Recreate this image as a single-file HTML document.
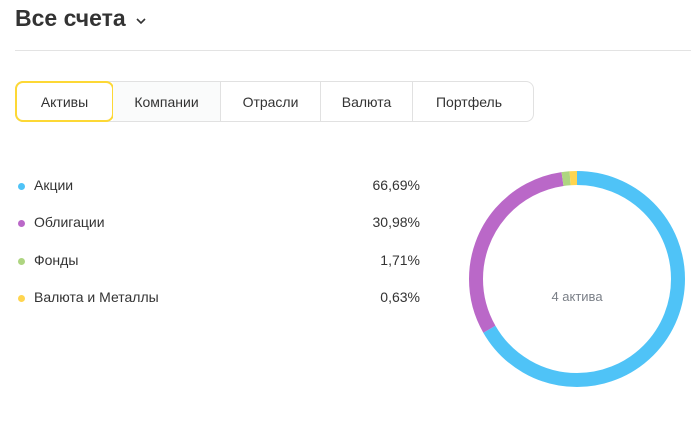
<!DOCTYPE html><html><head><meta charset="utf-8"><style>
body{margin:0;width:691px;height:423px;background:#fff;font-family:"Liberation Sans",sans-serif;position:relative;overflow:hidden;color:#333}
.t{position:absolute;left:15px;top:5px;font-size:23px;font-weight:bold;color:#333}
.hr{position:absolute;left:15px;right:0;top:50px;border-top:1px solid #e3e3e3}
.tabs{position:absolute;left:15px;top:81px;width:517px;height:39px;border:1px solid #e1e1e1;border-radius:8px;display:flex;font-size:14px}
.tabs div{display:flex;align-items:center;justify-content:center;border-left:1px solid #e1e1e1;color:#333}
.tabs div:first-child{border:2px solid #fdd835;border-radius:8px;margin:-1px;background:#fff}
.tabs div:nth-child(2){border-left:none;background:#fafbfb}
.r{position:absolute;left:18px;width:402px;font-size:14px;display:flex;justify-content:space-between;align-items:center}
.r i{display:inline-block;width:7px;height:7px;border-radius:50%;margin-right:9px;vertical-align:middle}
</style></head><body>
<div class="t">Все счета <svg width="14" height="10" viewBox="0 0 14 10" style="margin-left:2px"><path d="M3 3l4 4 4-4" fill="none" stroke="#333" stroke-width="1.6"/></svg></div>
<div class="hr"></div>
<div class="tabs"><div style="width:95px">Активы</div><div style="width:107px">Компании</div><div style="width:99px">Отрасли</div><div style="width:91px">Валюта</div><div style="width:112px">Портфель</div></div>
<div class="r" style="top:177px"><span><i style="background:#4fc3f7"></i>Акции</span><span>66,69%</span></div>
<div class="r" style="top:214px"><span><i style="background:#ba68c8"></i>Облигации</span><span>30,98%</span></div>
<div class="r" style="top:252px"><span><i style="background:#aed581"></i>Фонды</span><span>1,71%</span></div>
<div class="r" style="top:289px"><span><i style="background:#ffd54f"></i>Валюта и Металлы</span><span>0,63%</span></div>
<svg style="position:absolute;left:0;top:0" width="691" height="423">
<g transform="rotate(-90 577 279)" fill="none" stroke-width="14">
<circle cx="577" cy="279" r="101" stroke="#4fc3f7" stroke-dasharray="423.2 1000" stroke-dashoffset="0"/>
<circle cx="577" cy="279" r="101" stroke="#ba68c8" stroke-dasharray="196.6 1000" stroke-dashoffset="-423.2"/>
<circle cx="577" cy="279" r="101" stroke="#aed581" stroke-dasharray="7.6 1000" stroke-dashoffset="-619.8"/>
<circle cx="577" cy="279" r="101" stroke="#ffd54f" stroke-dasharray="7.2 1000" stroke-dashoffset="-627.4"/>
</g>
<text x="577" y="301" text-anchor="middle" font-size="13" fill="#7a7f87" font-family="Liberation Sans">4 актива</text>
</svg>
</body></html>
